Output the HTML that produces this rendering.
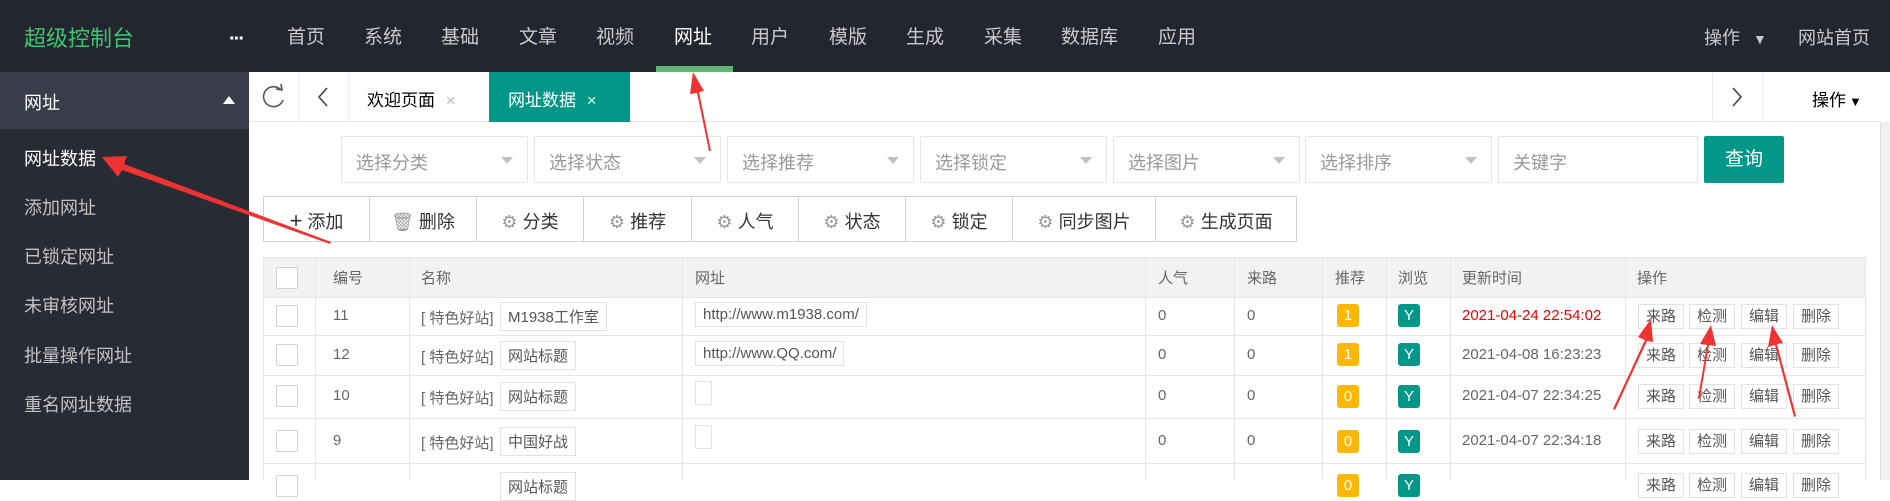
<!DOCTYPE html>
<html><head><meta charset="utf-8"><style>
*{margin:0;padding:0;box-sizing:border-box}
body{width:1890px;height:480px;overflow:hidden;position:relative;background:#fff;font-family:"Liberation Sans","Noto Sans CJK SC",sans-serif;color:#333}
.a{position:absolute}
#top{left:0;top:0;width:1890px;height:72px;background:#23262e}
.nav{position:absolute;top:22px;font-size:19px;color:#c9c9c9;white-space:nowrap}
#side{left:0;top:72px;width:249px;height:408px;background:#282b33}
.si{position:absolute;left:24px;font-size:18px;color:#c2c2c2}
.sel{position:absolute;top:136px;height:47px;border:1px solid #e6e6e6;font-size:18px;color:#999;padding:12px 14px;background:#fff}
.sel:after{content:"";position:absolute;right:14px;top:20px;border:6px solid transparent;border-top:7px solid #c2c2c2}
.tb{position:absolute;top:196px;height:46px;border:1px solid #d2d2d2;font-size:18px;color:#333;text-align:center;padding-top:11px;background:#fff}
.g{color:#999}
.th,.td{position:absolute;font-size:15px;color:#666}
.cb{position:absolute;width:22px;height:22px;border:1px solid #d2d2d2;background:#fff;border-radius:2px}
.tag{position:absolute;border:1px solid #e2e2e2;padding:3px 7px;font-size:15px;color:#555;background:#fff;white-space:nowrap}
.badge{position:absolute;width:22px;height:23px;border-radius:3px;color:#fff;font-size:15px;text-align:center;line-height:23px}
.ob{position:absolute;height:25px;border:1px solid #e2e2e2;font-size:15px;color:#555;line-height:23px;padding:0 7px;background:#fff}
.hl{position:absolute;left:263px;width:1602px;height:1px;background:#e6e6e6}
.vl{position:absolute;width:1px;background:#e6e6e6;top:257px;height:223px}
</style></head><body>
<div id="top" class="a"></div>
<div class="a" style="left:24px;top:21px;font-size:22px;color:#3ec46d">超级控制台</div>
<div class="a" style="left:229px;top:28px;font-size:20px;color:#fff;font-weight:bold;letter-spacing:-2px">···</div>
<div class="nav" style="left:287px">首页</div>
<div class="nav" style="left:364px">系统</div>
<div class="nav" style="left:441px">基础</div>
<div class="nav" style="left:519px">文章</div>
<div class="nav" style="left:596px">视频</div>
<div class="nav" style="left:674px;color:#fff">网址</div>
<div class="nav" style="left:751px">用户</div>
<div class="nav" style="left:829px">模版</div>
<div class="nav" style="left:906px">生成</div>
<div class="nav" style="left:984px">采集</div>
<div class="nav" style="left:1061px">数据库</div>
<div class="nav" style="left:1158px">应用</div>
<div class="a" style="left:656px;top:66px;width:77px;height:6px;background:#5fb878"></div>
<div class="nav" style="left:1704px;font-size:18px;top:24px">操作 <span style="font-size:14px;margin-left:8px">▼</span></div>
<div class="nav" style="left:1798px;font-size:18px;top:24px">网站首页</div>

<div id="side" class="a"></div>
<div class="a" style="left:0;top:72px;width:249px;height:57px;background:#393d49"></div>
<div class="si" style="top:89px;color:#fff">网址</div>
<div class="a" style="left:223px;top:96px;border:6px solid transparent;border-bottom:8px solid #fff;border-top:0"></div>
<div class="si" style="top:145px;color:#fff">网址数据</div>
<div class="si" style="top:194px">添加网址</div>
<div class="si" style="top:243px">已锁定网址</div>
<div class="si" style="top:292px">未审核网址</div>
<div class="si" style="top:342px">批量操作网址</div>
<div class="si" style="top:391px">重名网址数据</div>

<div class="a" style="left:249px;top:121px;width:1631px;height:1px;background:#e2e2e2"></div>
<div class="a" style="left:298px;top:72px;width:1px;height:50px;background:#eee"></div>
<div class="a" style="left:348px;top:72px;width:1px;height:50px;background:#eee"></div>
<div class="a" style="left:1712px;top:72px;width:1px;height:50px;background:#eee"></div>
<div class="a" style="left:1762px;top:72px;width:1px;height:50px;background:#eee"></div>
<svg class="a" style="left:261px;top:84px" width="26" height="26" viewBox="0 0 26 26"><path d="M20 6 A10 10 0 1 0 22 16" fill="none" stroke="#555" stroke-width="1.6"/><path d="M15 5 L21 6 L20 0" fill="none" stroke="#555" stroke-width="1.6"/></svg>
<svg class="a" style="left:315px;top:86px" width="16" height="22"><path d="M12 2 L4 11 L12 20" fill="none" stroke="#444" stroke-width="1.6"/></svg>
<div class="a" style="left:367px;top:86px;font-size:17px;color:#000">欢迎页面 <span style="color:#bbb;margin-left:6px">×</span></div>
<div class="a" style="left:489px;top:72px;width:141px;height:50px;background:#009688"></div>
<div class="a" style="left:508px;top:86px;font-size:17px;color:#fff">网址数据 <span style="color:#cfe;margin-left:6px">×</span></div>
<svg class="a" style="left:1729px;top:86px" width="16" height="22"><path d="M4 2 L12 11 L4 20" fill="none" stroke="#444" stroke-width="1.6"/></svg>
<div class="a" style="left:1812px;top:86px;font-size:17px;color:#000">操作<span style="font-size:13px;margin-left:3px">▼</span></div>
<div class="a" style="left:1880px;top:122px;width:10px;height:358px;background:#f1f1f1;border-left:1px solid #ddd"></div>

<div class="sel" style="left:341px;width:187px">选择分类</div>
<div class="sel" style="left:534px;width:187px">选择状态</div>
<div class="sel" style="left:727px;width:187px">选择推荐</div>
<div class="sel" style="left:920px;width:187px">选择锁定</div>
<div class="sel" style="left:1113px;width:187px">选择图片</div>
<div class="sel" style="left:1305px;width:187px">选择排序</div>
<div class="a" style="left:1498px;top:136px;width:200px;height:47px;border:1px solid #e6e6e6;font-size:18px;color:#999;padding:12px 14px">关键字</div>
<div class="a" style="left:1704px;top:136px;width:80px;height:47px;background:#009688;border-radius:2px;color:#fff;font-size:19px;text-align:center;line-height:47px">查询</div>

<div class="tb" style="left:263px;width:107px"><b style="font-size:22px;font-weight:normal">+</b> 添加</div>
<div class="tb" style="left:369px;width:108px"><span class="g">🗑︎</span> 删除</div>
<div class="tb" style="left:476px;width:108px"><span class="g">⚙</span> 分类</div>
<div class="tb" style="left:583px;width:109px"><span class="g">⚙</span> 推荐</div>
<div class="tb" style="left:691px;width:108px"><span class="g">⚙</span> 人气</div>
<div class="tb" style="left:798px;width:108px"><span class="g">⚙</span> 状态</div>
<div class="tb" style="left:905px;width:108px"><span class="g">⚙</span> 锁定</div>
<div class="tb" style="left:1012px;width:144px"><span class="g">⚙</span> 同步图片</div>
<div class="tb" style="left:1155px;width:142px"><span class="g">⚙</span> 生成页面</div>

<div class="a" style="left:263px;top:257px;width:1602px;height:40px;background:#f2f2f2"></div>
<div class="hl" style="top:257px"></div>
<div class="hl" style="top:297px"></div>
<div class="hl" style="top:335px"></div>
<div class="hl" style="top:375px"></div>
<div class="hl" style="top:418px"></div>
<div class="hl" style="top:463px"></div>
<div class="vl" style="left:263px"></div><div class="vl" style="left:315px"></div><div class="vl" style="left:409px"></div><div class="vl" style="left:682px"></div><div class="vl" style="left:1145px"></div><div class="vl" style="left:1234px"></div><div class="vl" style="left:1322px"></div><div class="vl" style="left:1386px"></div><div class="vl" style="left:1450px"></div><div class="vl" style="left:1625px"></div><div class="vl" style="left:1865px"></div>
<div class="cb" style="left:276px;top:267px"></div>
<div class="th" style="left:333px;top:267px">编号</div>
<div class="th" style="left:421px;top:267px">名称</div>
<div class="th" style="left:695px;top:267px">网址</div>
<div class="th" style="left:1158px;top:267px">人气</div>
<div class="th" style="left:1247px;top:267px">来路</div>
<div class="th" style="left:1335px;top:267px">推荐</div>
<div class="th" style="left:1398px;top:267px">浏览</div>
<div class="th" style="left:1462px;top:267px">更新时间</div>
<div class="th" style="left:1637px;top:267px">操作</div>

<div class="cb" style="left:276px;top:305px"></div>
<div class="td" style="left:333px;top:307px">11</div>
<div class="td" style="left:421px;top:307px">[ 特色好站]</div>
<div class="tag" style="left:500px;top:302px">M1938工作室</div>
<div class="tag" style="left:695px;top:302px">http://www.m1938.com/</div>
<div class="td" style="left:1158px;top:307px">0</div><div class="td" style="left:1247px;top:307px">0</div>
<div class="badge" style="left:1337px;top:304px;background:#ffb800">1</div>
<div class="badge" style="left:1398px;top:304px;background:#009688">Y</div>
<div class="td" style="left:1462px;top:307px;color:#e00">2021-04-24 22:54:02</div>

<div class="cb" style="left:276px;top:344px"></div>
<div class="td" style="left:333px;top:346px">12</div>
<div class="td" style="left:421px;top:346px">[ 特色好站]</div>
<div class="tag" style="left:500px;top:341px">网站标题</div>
<div class="tag" style="left:695px;top:341px">http://www.QQ.com/</div>
<div class="td" style="left:1158px;top:346px">0</div><div class="td" style="left:1247px;top:346px">0</div>
<div class="badge" style="left:1337px;top:343px;background:#ffb800">1</div>
<div class="badge" style="left:1398px;top:343px;background:#009688">Y</div>
<div class="td" style="left:1462px;top:346px">2021-04-08 16:23:23</div>

<div class="cb" style="left:276px;top:385px"></div>
<div class="td" style="left:333px;top:387px">10</div>
<div class="td" style="left:421px;top:387px">[ 特色好站]</div>
<div class="tag" style="left:500px;top:382px">网站标题</div>
<div class="tag" style="left:695px;top:381px;width:17px;height:24px;padding:0"></div>
<div class="td" style="left:1158px;top:387px">0</div><div class="td" style="left:1247px;top:387px">0</div>
<div class="badge" style="left:1337px;top:385px;background:#ffb800">0</div>
<div class="badge" style="left:1398px;top:385px;background:#009688">Y</div>
<div class="td" style="left:1462px;top:387px">2021-04-07 22:34:25</div>

<div class="cb" style="left:276px;top:430px"></div>
<div class="td" style="left:333px;top:432px">9</div>
<div class="td" style="left:421px;top:432px">[ 特色好站]</div>
<div class="tag" style="left:500px;top:427px">中国好战</div>
<div class="tag" style="left:695px;top:425px;width:17px;height:24px;padding:0"></div>
<div class="td" style="left:1158px;top:432px">0</div><div class="td" style="left:1247px;top:432px">0</div>
<div class="badge" style="left:1337px;top:430px;background:#ffb800">0</div>
<div class="badge" style="left:1398px;top:430px;background:#009688">Y</div>
<div class="td" style="left:1462px;top:432px">2021-04-07 22:34:18</div>

<div class="cb" style="left:276px;top:475px"></div>
<div class="tag" style="left:500px;top:472px">网站标题</div>
<div class="badge" style="left:1337px;top:474px;background:#ffb800">0</div>
<div class="badge" style="left:1398px;top:474px;background:#009688">Y</div>

<div class="ob" style="left:1638px;top:304px">来路</div><div class="ob" style="left:1689px;top:304px">检测</div><div class="ob" style="left:1741px;top:304px">编辑</div><div class="ob" style="left:1793px;top:304px">删除</div>
<div class="ob" style="left:1638px;top:343px">来路</div><div class="ob" style="left:1689px;top:343px">检测</div><div class="ob" style="left:1741px;top:343px">编辑</div><div class="ob" style="left:1793px;top:343px">删除</div>
<div class="ob" style="left:1638px;top:384px">来路</div><div class="ob" style="left:1689px;top:384px">检测</div><div class="ob" style="left:1741px;top:384px">编辑</div><div class="ob" style="left:1793px;top:384px">删除</div>
<div class="ob" style="left:1638px;top:429px">来路</div><div class="ob" style="left:1689px;top:429px">检测</div><div class="ob" style="left:1741px;top:429px">编辑</div><div class="ob" style="left:1793px;top:429px">删除</div>
<div class="ob" style="left:1638px;top:473px">来路</div><div class="ob" style="left:1689px;top:473px">检测</div><div class="ob" style="left:1741px;top:473px">编辑</div><div class="ob" style="left:1793px;top:473px">删除</div>

<svg class="a" style="left:0;top:0" width="1890" height="480">
<g fill="#ee3333">
<polygon points="331,242 330,244 122,170 118,177 102,157 127,156 124,164"/>
<polygon points="711,151 709,151 697,93 690,94 693,72 704,91 699,92"/>
<polygon points="1615,410 1613,409 1645,340 1638,337 1651,319 1653,342 1647,341"/>
<polygon points="1700,398 1698,398 1707,345 1700,344 1711,325 1716,346 1709,345"/>
<polygon points="1796,416 1794,417 1775,345 1768,347 1772,325 1783,343 1777,344"/>
</g>
</svg>
</body></html>
